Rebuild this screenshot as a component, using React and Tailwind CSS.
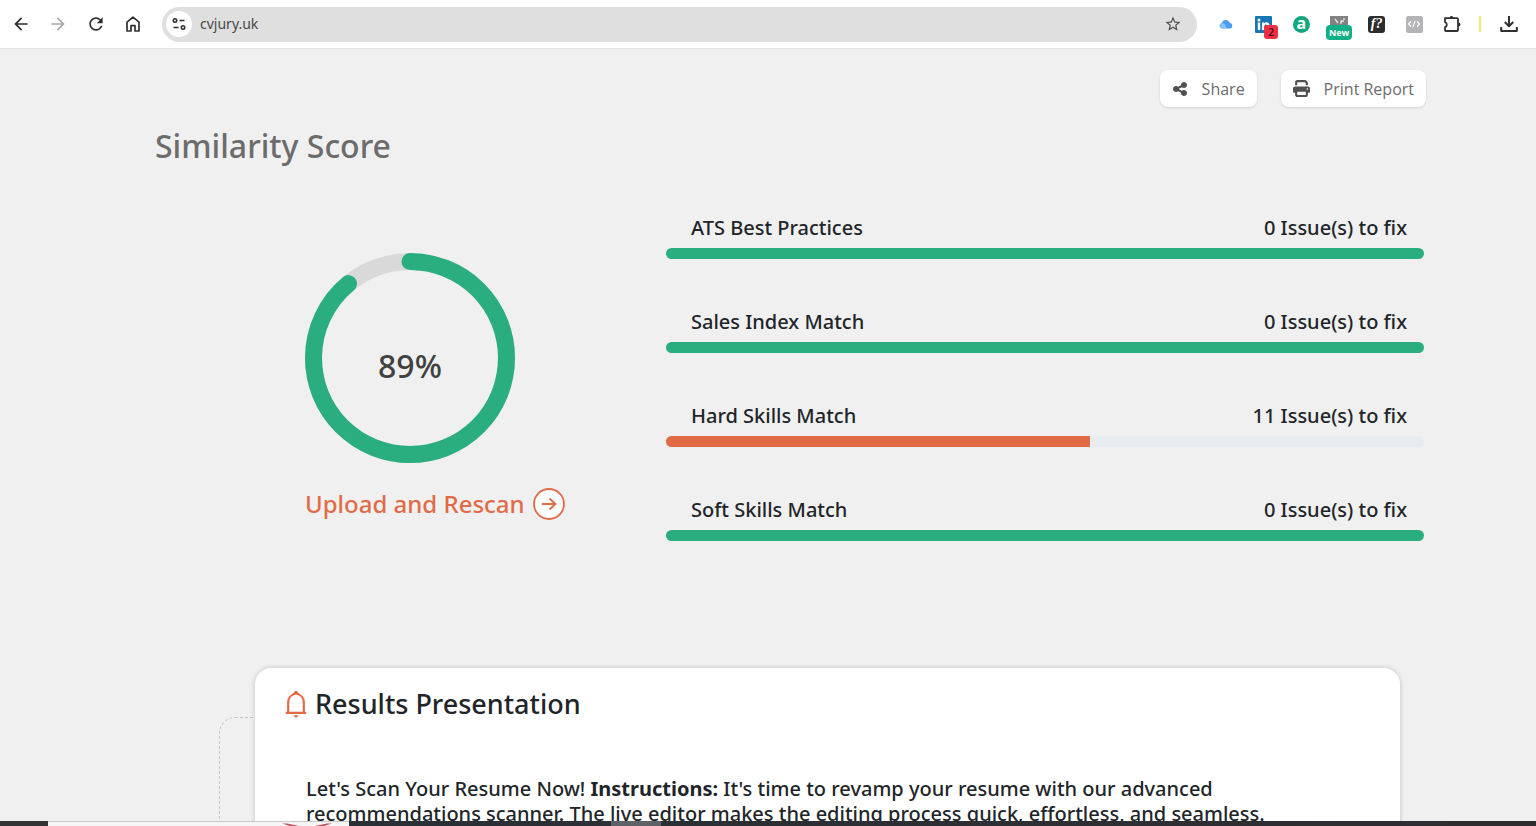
import { FaPrint, FaShareNodes } from "react-icons/fa6";
import { MdArrowBack, MdArrowForward, MdRefresh, MdStarBorder } from "react-icons/md";

const scores = [
  { id: "ats", label: "ATS Best Practices", issues: 0, value: 100 },
  { id: "sales", label: "Sales Index Match", issues: 0, value: 100 },
  { id: "hard", label: "Hard Skills Match", issues: 11, value: 56 },
  { id: "soft", label: "Soft Skills Match", issues: 0, value: 100 },
];

export default function App() {
  return (
    <div className="flex h-screen flex-col overflow-hidden bg-[#f0f0f0] font-['Noto_Sans',sans-serif] text-[#212529]">
      <BrowserBar />
      <main className="min-h-0 flex-1 overflow-hidden">
        <section className="pr-[110px] pl-[155px]">
          <div className="flex justify-end gap-6 pt-[21px] font-['Open_Sans',sans-serif]">
            <ActionButton icon={<FaShareNodes className="size-4" />} label="Share" />
            <ActionButton icon={<FaPrint className="size-[17px]" />} label="Print Report" />
          </div>
          <h1 className="mt-4 text-[32px] leading-[46px] font-medium text-[#6c6c6c]">
            Similarity Score
          </h1>
          <div className="mt-11 grid grid-cols-[511px_1fr]">
            <div className="pt-10 pl-[150px]">
              <ScoreRing value={89} />
              <a
                href="#rescan"
                className="mt-[25px] flex items-center gap-2 text-2xl font-medium text-[#e26b47]"
              >
                Upload and Rescan
                <CircleArrow />
              </a>
            </div>
            <div className="flex flex-col gap-[51px] pt-[3px] pr-0.5">
              {scores.map((score) => (
                <ScoreRow key={score.id} score={score} />
              ))}
            </div>
          </div>
        </section>

        <section className="mt-[127px] pr-[136px] pl-[255px]">
          <div className="relative">
            <div className="absolute top-[49px] -left-9 h-80 w-20 rounded-2xl border border-dashed border-[#c4c4c4]" />
            <article className="relative min-h-96 rounded-2xl bg-white px-[30px] pt-4 shadow-[0_0_5px_rgba(0,0,0,0.2)]">
              <h2 className="flex items-center gap-2 text-[27px] leading-10 font-medium">
                <BellIcon />
                Results Presentation
              </h2>
              <p className="mt-[52px] px-[21px] text-xl leading-[25px] font-medium">
                Let's Scan Your Resume Now! <strong className="font-bold">Instructions:</strong> It's
                time to revamp your resume with our advanced
                <br />
                recommendations scanner. The live editor makes the editing process quick,
                effortless, and seamless.
              </p>
            </article>
          </div>
        </section>
      </main>
      <BottomStrip />
    </div>
  );
}

function BrowserBar() {
  return (
    <header className="flex h-[49px] shrink-0 items-center border-b border-[#e2e2e2] bg-white pl-0.5 text-[#303030]">
      <nav className="grid w-[150px] grid-cols-4">
        <BarButton label="Back">
          <MdArrowBack className="size-5" />
        </BarButton>
        <BarButton label="Forward">
          <MdArrowForward className="size-5 text-[#a8a8a8]" />
        </BarButton>
        <BarButton label="Reload">
          <MdRefresh className="size-5" />
        </BarButton>
        <BarButton label="Home">
          <svg viewBox="0 0 18 18" className="size-[18px]" fill="none" stroke="currentColor" strokeWidth="1.7">
            <path d="M3 7.1 9 2.200l6 4.900v8.900h-4v-5.400H7v5.400H3z" strokeLinejoin="round" />
          </svg>
        </BarButton>
      </nav>
      <div className="ml-2.5 flex h-[35px] flex-1 items-center rounded-full bg-[#dfdfdf] pr-[15px] pl-1">
        <button
          type="button"
          aria-label="Site settings"
          className="flex size-[26px] items-center justify-center rounded-full bg-white"
        >
          <svg viewBox="0 0 16 16" className="size-4" fill="none" stroke="currentColor" strokeWidth="1.6">
            <circle cx="4" cy="4.5" r="1.7" />
            <path d="M8.500 4.500H13.500M2.500 11.500h5" />
            <circle cx="12" cy="11.500" r="1.700" />
          </svg>
        </button>
        <input
          type="text"
          aria-label="Address"
          defaultValue="cvjury.uk"
          className="ml-2 min-w-0 flex-1 bg-transparent text-sm text-[#484848] outline-none"
        />
        <button type="button" aria-label="Bookmark">
          <MdStarBorder className="size-[18px] text-[#505050]" />
        </button>
      </div>
      <div className="ml-2.5 grid w-[264px] grid-cols-7">
        <BarButton label="Cloud">
          <svg viewBox="0 0 14 10" className="h-2.5 w-3.5">
            <path d="M3 9.600a2.800 2.800 0 0 1-.3-5.500A4.300 4.300 0 0 1 10.800 3.700 3 3 0 0 1 11 9.600z" fill="#4b9df3" />
            <path d="M3 9.600a2.800 2.800 0 0 1-.3-5.500c2.200-.3 4 1.500 4.600 5.500z" fill="#86c3f8" />
          </svg>
        </BarButton>
        <BarButton label="LinkedIn">
          <span className="relative flex size-[17px] items-center justify-center rounded-[1px] bg-[#1776b3]">
            <svg viewBox="0 0 17 17" className="size-[17px]" fill="#fff">
              <circle cx="4" cy="4" r="1.500" />
              <path d="M2.800 6.500h2.400V14H2.800zM7 6.500h2.300v1.100c1.500-2.200 5.200-1.500 5.200 2V14h-2.400v-4c0-2-2.700-2-2.700 0v4H7z" />
            </svg>
            <span className="absolute -right-1.5 -bottom-1.5 flex size-3.5 items-center justify-center rounded-[3px] bg-[#ee2e43] text-[10px] leading-none font-medium text-[#3a1015]">
              2
            </span>
          </span>
        </BarButton>
        <BarButton label="Assistant">
          <span className="flex size-[17px] items-center justify-center rounded-full bg-[#12a77e] pb-0.5 text-base leading-none font-bold text-white">
            a
          </span>
        </BarButton>
        <BarButton label="New extension">
          <span className="relative flex h-[17px] w-[18px] justify-center bg-[#828282]">
            <svg viewBox="0 0 18 9" className="h-[9px] w-[18px]" fill="none" stroke="#e6e6e6" strokeWidth="1.3">
              <path d="m5 3 3 4M11 8V5h3M14 2v2" />
            </svg>
            <span className="absolute -bottom-[7px] rounded-[4px] bg-[#12b088] px-[3px] text-[9px] leading-[15px] font-bold text-white">
              New
            </span>
          </span>
        </BarButton>
        <BarButton label="Font finder">
          <span className="flex size-[17px] items-center justify-center rounded-[3px] bg-[#2c2c2c] font-['Liberation_Serif',serif] text-sm leading-none font-bold text-white italic">
            f?
          </span>
        </BarButton>
        <BarButton label="Source viewer">
          <span className="flex size-[17px] items-center justify-center rounded-[2px] bg-[#b4b4b6]">
            <svg viewBox="0 0 16 16" className="size-3.5" fill="none" stroke="#fff" strokeWidth="1.5">
              <path d="M4.500 5 1.800 8l2.700 3M11.500 5l2.700 3-2.700 3M9.300 4.500 6.700 11.500" />
            </svg>
          </span>
        </BarButton>
        <BarButton label="Extensions">
          <svg viewBox="0 0 20 20" className="size-5" fill="none" stroke="currentColor" strokeWidth="1.800">
            <path
              d="M3 4.200h12a1 1 0 0 1 1 1v10.800a1 1 0 0 1-1 1H4a1 1 0 0 1-1-1v-2.900c2.400-.6 2.400-4.300 0-5z"
              strokeLinejoin="round"
            />
            <path d="M7.500 4a2 2 0 0 1 4 0zM16.500 8.500a2 2 0 0 1 0 4z" fill="currentColor" stroke="none" />
          </svg>
        </BarButton>
      </div>
      <div className="ml-2 h-4 w-0.5 bg-[#f0e86a]" />
      <div className="flex w-[55px] justify-center">
        <BarButton label="Downloads">
          <svg
            viewBox="0 0 20 20"
            className="size-5"
            fill="none"
            stroke="currentColor"
            strokeWidth="2"
            strokeLinejoin="round"
          >
            <path d="M10 2v10M5.800 8 10 12.200 14.200 8M2.200 13v4h15.600v-4" />
          </svg>
        </BarButton>
      </div>
    </header>
  );
}

function BarButton({ label, children }) {
  return (
    <button type="button" aria-label={label} className="flex h-8 items-center justify-center">
      {children}
    </button>
  );
}

function ActionButton({ icon, label }) {
  return (
    <button
      type="button"
      className="flex h-[37px] items-center gap-3.5 rounded-lg bg-white px-3 text-base text-[#6c6c6c] shadow-sm"
    >
      <span className="text-[#505050]">{icon}</span>
      {label}
    </button>
  );
}

function ScoreRing({ value }) {
  return (
    <div className="relative flex size-[210px] items-center justify-center">
      <svg viewBox="0 0 210 210" className="absolute inset-0 -rotate-90" fill="none" strokeWidth="17">
        <circle cx="105" cy="105" r="96.5" stroke="#d9d9d9" />
        <circle
          cx="105"
          cy="105"
          r="96.5"
          stroke="#2aae80"
          strokeLinecap="round"
          pathLength="100"
          strokeDasharray={`${value} 100`}
        />
      </svg>
      <span className="relative pt-4 text-[32px] leading-10 font-medium text-[#404040]">{value}%</span>
    </div>
  );
}

function ScoreRow({ score }) {
  return (
    <div>
      <div className="flex justify-between pr-[17px] pb-2 pl-[25px] text-xl leading-6 font-medium">
        <span id={score.id}>{score.label}</span>
        <span>{score.issues} Issue(s) to fix</span>
      </div>
      <div
        role="progressbar"
        aria-labelledby={score.id}
        aria-valuenow={score.value}
        className="h-[11px] overflow-hidden rounded-full bg-[#e9ecee]"
      >
        <div
          className={score.value === 100 ? "h-full bg-[#2aae80]" : "h-full bg-[#e26b47]"}
          style={{ width: `${score.value}%` }}
        />
      </div>
    </div>
  );
}

function CircleArrow() {
  return (
    <svg viewBox="0 0 32 32" className="size-8" fill="none" stroke="currentColor" strokeWidth="1.8">
      <circle cx="16" cy="16" r="15" fill="#fff" />
      <path d="M9.500 16h13M17 11l5.500 5-5.500 5" strokeLinecap="round" strokeLinejoin="round" />
    </svg>
  );
}

function BellIcon() {
  return (
    <svg viewBox="0 0 22 28" className="h-7 w-[22px] text-[#e26b47]" fill="none" stroke="currentColor" strokeWidth="2.2">
      <path d="M3.200 22V12c0-4 3-7.500 7.800-8.500 4.800 1 7.800 4.500 7.800 8.500v10M.8 22.800h20.400" />
      <path d="M7.500 4.200C9 3 9.500.8 11 .8S13 3 14.500 4.200zM8.300 25.200h5.400L11 28z" fill="currentColor" stroke="none" />
    </svg>
  );
}

function BottomStrip() {
  return (
    <footer className="flex h-[5px] shrink-0 bg-linear-to-r from-[#263238] to-[#302d30]">
      <div className="w-12 bg-[#333436]" />
      <div className="w-[301px] border-t border-[#c8c8c8] bg-[#f6f6f6] pl-[234px]">
        <svg viewBox="0 0 50 4" className="h-1 w-[50px]" fill="#b9505a">
          <path d="M0 1.500h5l12 2.500h-9zM50 1.500h-5L33 4h9z" />
        </svg>
      </div>
      <div className="ml-[262px] w-[50px] bg-[#5c6265]" />
    </footer>
  );
}
